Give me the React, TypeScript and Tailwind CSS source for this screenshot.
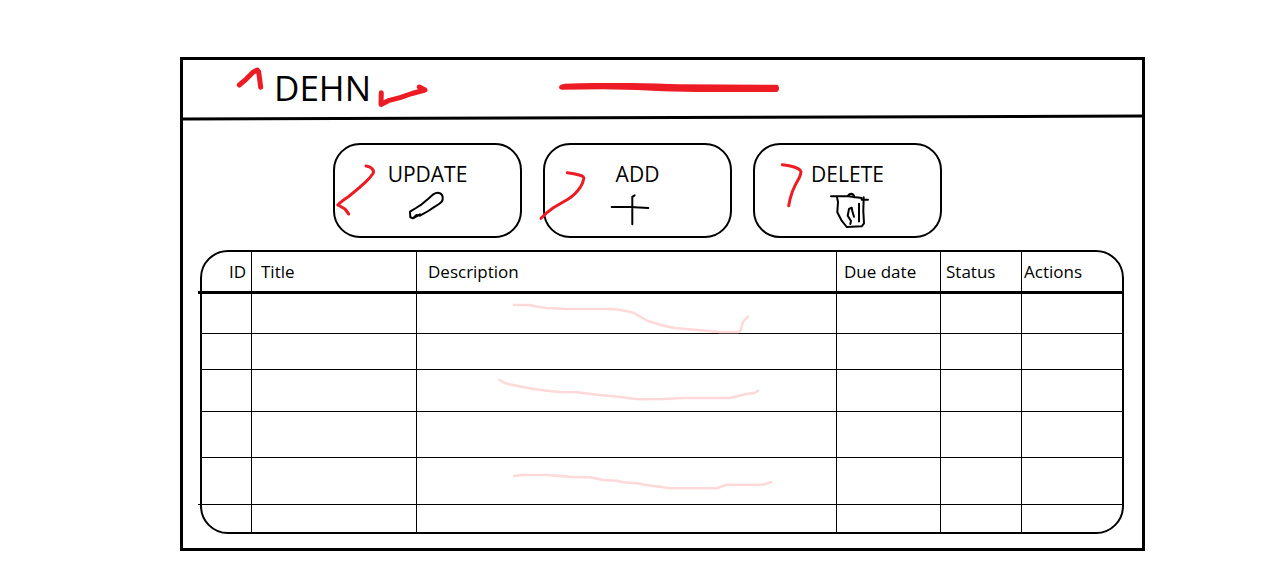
import React from "react";

type Action = {
  label: string;
  icon: React.ReactNode;
  mark: string;
};

const PencilIcon = () => (
  <svg aria-hidden="true" className="mt-[3px] mr-1 h-[38px] w-9 overflow-visible" viewBox="0 0 36 38" fill="none" stroke="black" strokeWidth="2" strokeLinecap="round" strokeLinejoin="round">
    <path d="M2 20.7L8 17L13.7 13.3L20 8L25.3 3.3Q29 1 32 2.3Q35 3.5 34.7 8Q34.5 11 31 13L25.3 16.7L20.3 20L12 24.7L8.5 24L5 27.3L2.3 26.3ZM5 27.3L12 23.3" />
  </svg>
);

const PlusIcon = () => (
  <svg aria-hidden="true" className="mt-[3px] mr-[14px] h-[38px] w-[39px] overflow-visible" viewBox="0 0 39 38" fill="none" stroke="black" strokeWidth="2" strokeLinecap="round" strokeLinejoin="round">
    <path d="M.7 16H19L37.3 17M23.6 4.3L21.3 5.8V33.3" />
  </svg>
);

const TrashIcon = () => (
  <svg aria-hidden="true" className="mt-[3px] ml-1 h-[38px] w-[42px] overflow-visible" viewBox="0 0 42 38" fill="none" stroke="black" strokeWidth="2" strokeLinecap="round" strokeLinejoin="round">
    <path d="M2 5.3H19.3L32.7 7V8.7H39M18.7 5.3Q20 2.7 22.3 2.7Q25 3 25.3 6.3" />
    <path d="M8 6.3L9 11L8.3 21.3L12.7 29.7L17.7 36L32.7 35.3L35 32.3L34.3 20L34.7 6.3" />
    <path d="M21.3 33L22 30L18.7 24.7L20 18L22.7 16.7L23.3 20L25 25.7M30 12.7V30.5" />
  </svg>
);

const actions: Action[] = [
  {
    label: "UPDATE",
    icon: <PencilIcon />,
    mark: "M31 21Q35 21.5 36.7 23.3Q39.5 26 38 28.5Q35 33 30 37.7Q22 45 13.3 51.7Q6 56.5 2.7 60Q6 61.5 10 64L13.7 69",
  },
  {
    label: "ADD",
    icon: <PlusIcon />,
    mark: "M22.3 27.7Q29 28.5 35 30.3Q39.5 31.5 38.7 34Q38 38 35 42.7Q30 50 23.3 54L8.3 62.7Q2 67 -4 73.3",
  },
  {
    label: "DELETE",
    icon: <TrashIcon />,
    mark: "M27.3 19.7Q33 20 38.3 21.7Q45.5 24 46 26.7Q46 29 44 33.3Q40 40 37.3 46.7Q35 53 33.7 60.7",
  },
];

const columns = [
  { title: "ID", cell: "pr-[5px] text-right" },
  { title: "Title", cell: "border-l pl-[9px] text-left" },
  { title: "Description", cell: "border-l pl-[11px] text-left" },
  { title: "Due date", cell: "border-l pl-[7px] text-left" },
  { title: "Status", cell: "border-l pl-[5px] text-left" },
  { title: "Actions", cell: "border-l pl-[2px] text-left" },
];

const rows = [
  {
    height: "h-10 border-b",
    mark: "M97 11H112Q120 13 130 14L150 15H193Q207 16 216 18.7L231 27Q245 32 258 34Q280 36 303 38H321Q324 37 324 35L326 27.7L331 22.7",
  },
  { height: "h-9 border-b" },
  {
    height: "h-[42px] border-b",
    mark: "M82.3 9.7L88 13.3L99.7 15.7L118 19.3Q130 21 143 22L160 22.3Q184 25.5 206 27.3Q214 29 223 29.3L246 29L266 28H313L328 24.3L338 22.7L341 20.7",
  },
  { height: "h-[46px] border-b" },
  {
    height: "h-[47px] border-b",
    mark: "M97 18L105 17H130L156 19L173 19.3L186 22L200 22.7L206 24.3L220 25.3L230 27.3L240 28.3L253 30.3H300Q305 28 310 26.7H346L354 24",
  },
  { height: "h-[27px]" },
];

export default function App() {
  return (
    <div className="min-h-screen bg-white pt-[57px] pr-[139px] pb-9 pl-[180px] font-['Open_Sans','Noto_Sans',sans-serif] text-black">
      <main className="border-[3px] border-black pb-[14px]">
        <header className="flex h-14 items-center">
          <div className="flex w-[375px] shrink-0 items-center pl-[53px]">
            <svg aria-hidden="true" className="h-14 w-7 shrink-0" viewBox="0 0 28 56" fill="none" stroke="#ed1c24" strokeWidth="5" strokeLinecap="round" strokeLinejoin="round">
              <path d="M3.3 25L10 19.3L17 12.3L21.3 10L22.7 12L24.7 27.3" />
            </svg>
            <h1 className="ml-[10px] text-[35px] leading-[56px]">DEHN</h1>
            <svg aria-hidden="true" className="ml-[5px] h-14 w-[52px] shrink-0" viewBox="0 0 52 56" fill="none" stroke="#ed1c24" strokeWidth="5" strokeLinecap="round" strokeLinejoin="round">
              <path d="M5.3 32.7L5 44.5L12.3 40.7L24 37.7L36 33.5L49 30L43.3 27" />
            </svg>
          </div>
          <svg aria-hidden="true" className="h-14 w-[222px]" viewBox="0 0 222 56" fill="#ed1c24">
            <path d="M3.7 29.7Q1 29.5 1 27.3Q1 24.5 7 23.7Q25 22.7 45 23H72Q100 23.5 122 24.3L218.5 24.7Q221 25 221 28.3Q221 31.5 218.5 32L152 32Q125 32 105 31.3L79 30L45 29.3Z" />
          </svg>
        </header>
        <div className="h-[3px] -skew-y-[0.18deg] bg-black" />

        <div className="mt-6 flex gap-[21px] pl-[150px]">
          {actions.map((action) => (
            <button
              key={action.label}
              type="button"
              className="relative flex h-[95px] w-[189px] flex-col items-center rounded-[27px] border-2 border-black pt-[15px]"
            >
              <span className="text-[21px] leading-[28px]">{action.label}</span>
              {action.icon}
              <svg aria-hidden="true" className="absolute top-0 left-0 h-[91px] w-[185px] overflow-visible" viewBox="0 0 185 91" fill="none" stroke="#ed1c24" strokeWidth="3" strokeLinecap="round" strokeLinejoin="round">
                <path d={action.mark} />
              </svg>
            </button>
          ))}
        </div>

        <div className="relative mr-[18px] ml-[17px] mt-3 rounded-[28px] border-2 border-black">
          <table className="w-full table-fixed border-separate border-spacing-0 text-[17px] leading-6">
            <colgroup>
              <col className="w-[49px]" />
              <col className="w-[165px]" />
              <col />
              <col className="w-[104px]" />
              <col className="w-[81px]" />
              <col className="w-[101px]" />
            </colgroup>
            <thead>
              <tr>
                {columns.map((column) => (
                  <th key={column.title} scope="col" className={`h-[42px] border-b-[3px] border-black py-0 font-normal ${column.cell}`}>
                    {column.title}
                  </th>
                ))}
              </tr>
            </thead>
            <tbody>
              {rows.map((row, r) => (
                <tr key={r}>
                  {columns.map((column, c) => (
                    <td key={column.title} className={`relative border-black p-0 ${row.height} ${c > 0 ? "border-l" : ""}`}>
                      {c === 2 && row.mark && (
                        <svg aria-hidden="true" className="absolute top-0 left-0 h-10 w-[360px] overflow-visible" viewBox="0 0 360 40" fill="none" stroke="#ffd9d9" strokeWidth="2.5" strokeLinecap="round" strokeLinejoin="round">
                          <path d={row.mark} />
                        </svg>
                      )}
                    </td>
                  ))}
                </tr>
              ))}
            </tbody>
          </table>
          <span className="absolute top-[39px] -left-1 h-[3px] w-1 bg-black" />
          <span className="absolute bottom-[27px] -left-1 h-px w-1 bg-black" />
        </div>
      </main>
    </div>
  );
}
